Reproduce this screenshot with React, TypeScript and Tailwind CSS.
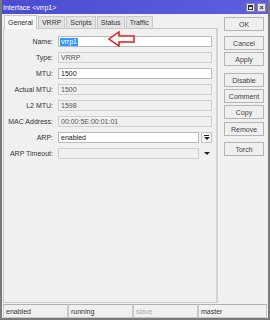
const font = { fontFamily: '"Liberation Sans", Arial, sans-serif' };

const Field = ({ label, value, ro, children }: { label: string; value?: string; ro?: boolean; children?: React.ReactNode }) => (
    <div className="flex items-center h-[11px]">
        <div className="w-[49px] text-right text-[7px] text-[#333] leading-none">{label}</div>
        <div className="ml-[5px] flex-1 flex items-center h-full">
            {children ?? (
                <div className={`flex-1 h-full border text-[7px] leading-none flex items-center px-[2px] ${ro ? 'bg-[#f0f0f0] border-[#cfcfcf] text-[#555]' : 'bg-white border-[#b9b9b9] text-[#222]'}`}>
                    {value}
                </div>
            )}
        </div>
    </div>
);

const Btn = ({ label, className = '' }: { label: string; className?: string }) => (
    <div className={`h-[14px] w-[40px] border border-[#b5b5b5] bg-[#efefef] text-[7px] text-[#444] flex items-center justify-center leading-none ${className}`}>
        {label}
    </div>
);

const App = () => {
    return (
        <div style={font} className="w-[270px] h-[320px] bg-[#f0f0f0] flex flex-col border-l-2 border-r-2 border-b-2 border-[#7a7a7a] overflow-hidden">
            {/* title bar */}
            <div className="h-[14px] bg-gradient-to-r from-[#4c4cd0] to-[#5e5ee0] flex items-center justify-between pl-[1px] pr-[2px]">
                <span className="text-white text-[7px] leading-none">Interface &lt;vrrp1&gt;</span>
                <div className="flex gap-[2px]">
                    <div className="w-[9px] h-[9px] bg-[#e4e4e4] border border-[#8a8a8a] flex items-center justify-center">
                        <div className="w-[5px] h-[5px] border border-[#333] border-t-2"></div>
                    </div>
                    <div className="w-[9px] h-[9px] bg-[#e4e4e4] border border-[#8a8a8a] flex items-center justify-center text-[7px] font-bold leading-none text-[#222]">
                        ×
                    </div>
                </div>
            </div>

            <div className="flex-1 flex pl-[1px] pr-[3px]">
                {/* left: tabs + panel */}
                <div className="w-[215px] flex flex-col">
                    <div className="h-[14px] flex items-end pl-[1px] text-[7px] text-[#333] leading-none">
                        <div className="h-[14px] px-[3px] flex items-center bg-[#f7f7f7] border border-b-0 border-[#c8c8c8] relative top-[1px]">General</div>
                        <div className="h-[12px] px-[3px] flex items-center bg-[#e3e3e3] border border-b-0 border-[#c8c8c8] ml-[1px]">VRRP</div>
                        <div className="h-[12px] px-[3px] flex items-center bg-[#e3e3e3] border border-b-0 border-[#c8c8c8] ml-[1px]">Scripts</div>
                        <div className="h-[12px] px-[3px] flex items-center bg-[#e3e3e3] border border-b-0 border-[#c8c8c8] ml-[1px]">Status</div>
                        <div className="h-[12px] px-[3px] flex items-center bg-[#e3e3e3] border border-b-0 border-[#c8c8c8] ml-[1px]">Traffic</div>
                    </div>
                    <div className="flex-1 border border-[#c8c8c8] border-r-2 border-r-[#d4d4d4] pt-[7px] pr-[4px] flex flex-col gap-[5px]">
                        <Field label="Name:">
                            <div className="flex-1 h-full border border-[#b9b9b9] bg-white flex items-center px-[1px] relative">
                                <span className="bg-[#3399ff] text-white text-[7px] leading-none px-[1px] h-[8px] flex items-center">vrrp1</span>
                                <svg className="absolute left-[49px] top-[-6px]" width="27" height="16" viewBox="0 0 27 16">
                                    <path d="M1 8 L11 1 L11 5 L26 5 L26 11 L11 11 L11 15 Z" fill="white" stroke="#e41b1b" strokeWidth="1.5" strokeLinejoin="miter" />
                                </svg>
                            </div>
                        </Field>
                        <Field label="Type:" value="VRRP" ro />
                        <Field label="MTU:" value="1500" />
                        <Field label="Actual MTU:" value="1500" ro />
                        <Field label="L2 MTU:" value="1598" ro />
                        <Field label="MAC Address:" value="00:00:5E:00:01:01" ro />
                        <Field label="ARP:">
                            <div className="flex-1 h-full border border-[#b9b9b9] bg-white text-[7px] leading-none flex items-center px-[2px] text-[#222]">enabled</div>
                            <div className="w-[11px] h-full ml-[2px] border border-[#c4c4c4] bg-[#f4f4f4] flex flex-col items-center justify-center gap-[1px]">
                                <div className="w-[5px] h-[1px] bg-[#222]"></div>
                                <div className="w-0 h-0 border-l-[3px] border-r-[3px] border-t-[3px] border-l-transparent border-r-transparent border-t-[#222]"></div>
                            </div>
                        </Field>
                        <Field label="ARP Timeout:">
                            <div className="flex-1 h-full border border-[#cfcfcf] bg-[#f0f0f0]"></div>
                            <div className="w-[11px] h-full ml-[2px] flex items-center justify-center">
                                <div className="w-0 h-0 border-l-[3px] border-r-[3px] border-t-[3px] border-l-transparent border-r-transparent border-t-[#222]"></div>
                            </div>
                        </Field>
                    </div>
                </div>

                {/* right: buttons */}
                <div className="ml-[6px] flex flex-col pt-[3px]">
                    <Btn label="OK" />
                    <Btn label="Cancel" className="mt-[5px]" />
                    <Btn label="Apply" className="mt-[2px]" />
                    <Btn label="Disable" className="mt-[7px]" />
                    <Btn label="Comment" className="mt-[2px]" />
                    <Btn label="Copy" className="mt-[2px]" />
                    <Btn label="Remove" className="mt-[3px]" />
                    <Btn label="Torch" className="mt-[6px]" />
                </div>
            </div>

            {/* status bar */}
            <div className="h-[14px] mt-[1px] flex pl-[1px] pr-[1px] text-[7px] leading-none">
                <div className="w-[65px] border border-[#c8c8c8] border-t-[#b0b0b0] flex items-center pl-[2px] text-[#333]">enabled</div>
                <div className="w-[65px] border border-[#c8c8c8] border-t-[#b0b0b0] flex items-center pl-[2px] text-[#333]">running</div>
                <div className="w-[65px] border border-[#c8c8c8] border-t-[#b0b0b0] flex items-center pl-[2px] text-[#aaa]">slave</div>
                <div className="flex-1 border border-[#c8c8c8] border-t-[#b0b0b0] flex items-center pl-[2px] text-[#333]">master</div>
            </div>
        </div>
    );
};

export default App;
